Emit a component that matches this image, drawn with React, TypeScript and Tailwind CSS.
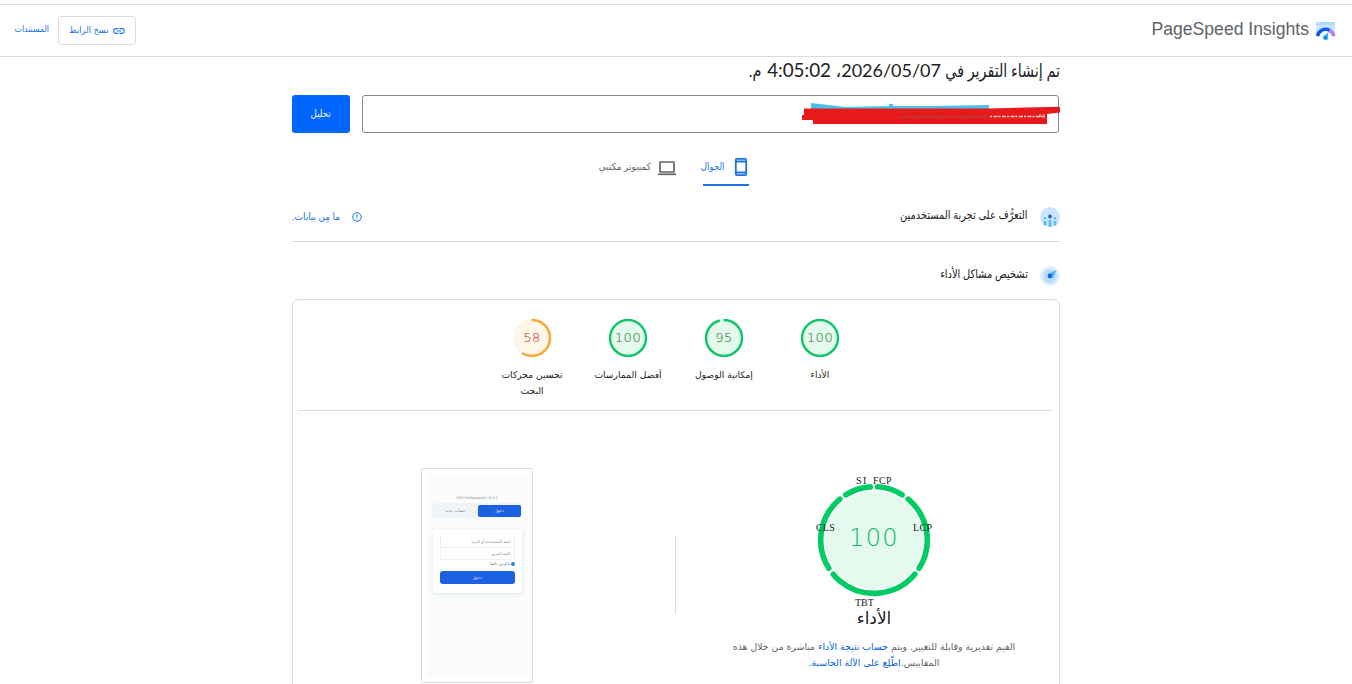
import type { ReactNode } from 'react';
import { clsx } from 'clsx';

interface ScoreProps {
  score: number;
  label: string;
  tone?: 'pass' | 'average';
}

function ScoreGauge({ score, label, tone = 'pass' }: ScoreProps) {
  const pass = tone === 'pass';
  return (
    <div className="flex w-24 flex-col items-center">
      <div className="relative size-10">
        <svg viewBox="0 0 40 40" className="size-10">
          <circle cx="20" cy="20" r="19" fill={pass ? '#e5faef' : '#fff6ea'} />
          <circle
            cx="20"
            cy="20"
            r="18"
            fill="none"
            stroke={pass ? '#18c46b' : '#f6a93b'}
            strokeWidth="2.5"
            strokeLinecap={score < 100 ? 'round' : 'butt'}
            pathLength={100}
            strokeDasharray={score < 100 ? `${score} 100` : undefined}
            strokeDashoffset={score < 100 ? -0.5 : undefined}
            transform="rotate(-90 20 20)"
          />
        </svg>
        <span
          dir="ltr"
          className={clsx(
            "absolute inset-0 flex items-center justify-center font-['DejaVu_Sans',sans-serif] text-[13px] font-extralight tracking-[0.6px]",
            pass ? 'text-[#0f6f0f]' : 'text-[#b42c0c]',
          )}
        >
          {score}
        </span>
      </div>
      <span className="mt-[9px] w-[76px] text-center font-['DejaVu_Sans',sans-serif] text-[9.2px] leading-4 text-[#212121]">
        {label}
      </span>
    </div>
  );
}

// Start and end angle of every metric arc, clockwise from the top.
const arcs = [
  [4, 32],
  [40, 122],
  [130, 230],
  [238, 320],
  [328, 356],
];

const metrics = [
  { name: 'SI', place: 'left-[44px] top-[1px] tracking-[1.4px]' },
  { name: 'FCP', place: 'left-[61px] top-[1px] tracking-[0.4px]' },
  { name: 'CLS', place: 'left-[4px] top-[48px] tracking-[0.2px]' },
  { name: 'LCP', place: 'left-[101px] top-[48px] tracking-[0.3px]' },
  { name: 'TBT', place: 'left-[43px] top-[123px]' },
];

function PerformanceGauge() {
  return (
    <div dir="ltr" className="relative h-[136px] w-[124px]">
      <svg viewBox="0 0 124 136" className="h-[136px] w-[124px]">
        <circle cx="62" cy="68" r="49" fill="#e5faef" />
        {arcs.map(([from, to]) => (
          <circle
            key={from}
            cx="62"
            cy="68"
            r="53.3"
            fill="none"
            stroke="#0c6"
            strokeWidth="5.6"
            strokeLinecap="round"
            pathLength={360}
            strokeDasharray={`${to - from} 360`}
            transform={`rotate(${from - 90} 62 68)`}
          />
        ))}
      </svg>
      <span className="absolute inset-x-0 top-[50px] text-center font-['DejaVu_Sans',sans-serif] text-[24px] leading-8 font-extralight tracking-[1.4px] text-[#08b95b]">
        100
      </span>
      {metrics.map(({ name, place }) => (
        <span
          key={name}
          className={clsx("absolute font-['Liberation_Serif',serif] text-[10px] leading-4 text-[#212121]", place)}
        >
          {name}
        </span>
      ))}
    </div>
  );
}

function PhonePreview() {
  return (
    <div className="h-[215px] w-28 rounded-xs border border-[#d8dbde] bg-white p-[5px]">
      <div className="flex h-full flex-col items-center bg-[#fafcfc] pt-[22px] font-['DejaVu_Sans',sans-serif]">
        <span dir="ltr" className="h-[5px] text-[3.5px] leading-[5px] text-[#8c9196]">SMT Professional v5.0.1</span>
        <div className="mt-[2px] flex h-[15px] w-[90px] items-center rounded-[3px] bg-[#f0f4f8] px-px">
          <div className="flex h-3 w-[43px] items-center justify-center rounded-[2px] bg-[#1b60e0] text-[4px] text-white">دخول</div>
          <div className="flex-1 text-center text-[4px] text-[#6d747c]">حساب جديد</div>
        </div>
        <div className="mt-[11px] h-[64px] w-[89px] rounded-[3px] bg-white px-[7px] pt-[7px] shadow-[0_1px_4px_#dde5e8]">
          <div className="flex h-3 items-center border border-t-0 border-[#edf0f2] px-[3px] text-[4px] text-[#858b90]">اسم المستخدم أو البريد</div>
          <div className="flex h-3 items-center border border-t-0 border-[#edf0f2] px-[3px] text-[4px] text-[#858b90]">كلمة المرور</div>
          <div className="flex h-[11px] items-center pb-1 text-[4px] text-[#50565c]">
            <i className="size-1 rounded-full bg-[#2484e0]" />
            تذكرني دائما
          </div>
          <div className="flex h-[13px] items-center justify-center rounded-[3px] bg-[#1b60e0] text-[4px] text-white">دخول</div>
        </div>
      </div>
    </div>
  );
}

function SectionTitle({ icon, children }: { icon: ReactNode; children: ReactNode }) {
  return (
    <div className="flex items-center gap-3">
      {icon}
      <h2 className="origin-right scale-x-[.82] pb-1 text-[12px] leading-5 whitespace-nowrap text-[#202124]">{children}</h2>
    </div>
  );
}

function UsersIcon() {
  return (
    <svg viewBox="0 0 20 20" className="size-5">
      <circle cx="10" cy="10" r="10" fill="#cce4fc" />
      <path d="M5 14v4.500M10 13v7M15 14v4.500" stroke="#53bdf3" strokeWidth="2.6" />
      <circle cx="5" cy="11.3" r="1.3" fill="#53bdf3" />
      <circle cx="15" cy="11.3" r="1.3" fill="#53bdf3" />
      <circle cx="10" cy="9.5" r="1.9" fill="#1769e0" />
    </svg>
  );
}

function DiagnoseIcon() {
  return (
    <svg viewBox="0 0 20 20" className="size-5">
      <circle cx="10" cy="10" r="10" fill="#e0effe" />
      <circle cx="10" cy="10" r="7" fill="#bcdcfd" />
      <path d="M8 8l8.500-4-4 8.500z" fill="#4bb8f5" />
      <circle cx="10" cy="10" r="2.4" fill="#1268ea" />
    </svg>
  );
}

function Logo() {
  return (
    <svg viewBox="0 0 20 20" className="mt-px size-5">
      <path d="M0 1h19v14H0z" fill="#cbe5fd" />
      <path d="M0 1h19v3H0z" fill="#afd8fb" />
      <path d="M1.500 2.500h4" stroke="#fff" strokeDasharray="1 1" />
      <path d="M3 17a6.500 6.500 0 0 1 13 0z" fill="#fff" />
      <path d="M1.600 15.200a8.200 8.200 0 0 1 12-6" fill="none" stroke="#0b57f0" strokeWidth="3.4" />
      <path d="M13.600 9.200a8.200 8.200 0 0 1 4.200 6" fill="none" stroke="#bd78f4" strokeWidth="3.4" />
      <path d="M8 15l4.500-4-.8 6z" fill="#35b5ef" />
      <circle cx="9.600" cy="16.600" r="2.700" fill="#35b5ef" />
      <circle cx="9.600" cy="16.600" r="1.100" fill="#1067df" />
    </svg>
  );
}

// Marker strokes that cover the address in the field.
function Redaction() {
  return (
    <svg viewBox="0 0 260 24" className="absolute -right-0.5 top-[6px] h-6 w-[260px]">
      <path d="M11 1q18 2 34 4l44-1V2h4v2h40l56-1v5H11z" fill="#49bfe9" />
      <path d="M4 6.500h184l72-1.800v5.800l-13 1.500v10H13v-4H2v-5h2z" fill="#e8191b" />
      <path d="M100 15h90" stroke="#87616c" strokeWidth="1" strokeDasharray="3 1 1 1" />
      <path d="M190 14.500h55" stroke="#f7dada" strokeWidth="1.300" strokeDasharray="2 1.500 4 1" />
      <path d="M240 12v3M244 12v4" stroke="#f7dada" />
    </svg>
  );
}

export default function App() {
  return (
    <div dir="rtl" className="h-[684px] overflow-hidden bg-white pt-1 font-['Liberation_Sans','DejaVu_Sans',sans-serif] text-[#202124]">
      <header className="flex h-[53px] items-center justify-between border-y border-[#dadce0] pl-3.5 pr-4">
        <div className="flex items-center gap-[7px]">
          <Logo />
          <span dir="ltr" className="pb-[3px] text-[17.6px] text-[#5f6368]">PageSpeed Insights</span>
        </div>
        <div className="flex items-center gap-[9px] text-[9px] text-[#1a73e8]">
          <button className="flex h-[29px] w-[78px] items-center gap-[3px] rounded-[3px] border border-[#dadce0] pr-[9px]">
            <svg viewBox="0 0 24 24" className="size-3.5 shrink-0" fill="currentColor">
              <path d="M3.900 12c0-1.710 1.390-3.100 3.100-3.100h4V7H7c-2.760 0-5 2.240-5 5s2.240 5 5 5h4v-1.900H7c-1.710 0-3.100-1.390-3.100-3.100zM8 13h8v-2H8v2zm9-6h-4v1.900h4c1.710 0 3.100 1.390 3.100 3.100s-1.390 3.100-3.100 3.100h-4V17h4c2.760 0 5-2.240 5-5s-2.240-5-5-5z" />
            </svg>
            <span className="origin-right scale-x-[.93] whitespace-nowrap">نسخ الرابط</span>
          </button>
          <a className="w-[35px] origin-right scale-x-[.87] pb-0.5 whitespace-nowrap">المستندات</a>
        </div>
      </header>

      <main className="mx-auto w-[768px]">
        <h1 className="flex h-[38px] font-['Lato','DejaVu_Sans',sans-serif] text-[18px] leading-[26px] whitespace-nowrap">
          <span className="w-[119px] origin-right scale-x-[.795]">تم إنشاء التقرير في</span>
          <span className="w-[110px]">2026/05/07،</span>
          <span className="w-[66px] text-[18.8px]">4:05:02</span>
          <span className="pr-[4px]"><span className="inline-block origin-right scale-x-[.8]">م.</span></span>
        </h1>
        <div className="flex gap-3">
          <div className="relative mr-px h-[38px] w-[697px] rounded-[3px] border border-[#80868b]">
            <Redaction />
          </div>
          <button className="h-[38px] w-[58px] rounded-[3px] bg-[#0066ff] pb-0.5 text-[10px] text-white">
            <span className="inline-block scale-x-[.86]">تحليل</span>
          </button>
        </div>

        <nav className="mt-4 flex justify-center gap-[26px] text-[10px]">
          <div className="mr-[4px] flex h-[37px] w-[46px] items-center gap-[9px] border-b-2 border-[#1a73e8] text-[#1a73e8]">
            <svg viewBox="0 0 16 20" className="h-5 w-4 shrink-0" fill="none" stroke="currentColor" strokeWidth="1.8">
              <rect x="2.800" y="1.900" width="10.400" height="16.200" rx="1" />
              <path d="M3 4.500h10M3 15.500h10" />
            </svg>
            <span className="origin-right scale-x-[.86] whitespace-nowrap">الجوال</span>
          </div>
          <div className="flex h-[37px] w-[78px] items-center gap-1.5 text-[#5f6368]">
            <svg viewBox="0 0 20 18" className="h-[18px] w-5 shrink-0" fill="none" stroke="currentColor" strokeWidth="1.700">
              <rect x="3" y="3" width="14" height="10" rx=".5" />
              <path d="M1 15.300h18" />
            </svg>
            <span className="origin-right scale-x-[.9] pb-0.5 whitespace-nowrap">كمبيوتر مكتبي</span>
          </div>
        </nav>

        <section className="mt-[7px] flex h-[49px] items-center justify-between border-b border-[#dadce0]">
          <SectionTitle icon={<UsersIcon />}>التعرُّف على تجربة المستخدمين</SectionTitle>
          <div className="flex items-center gap-[11px] text-[10px] text-[#1a73e8]">
            <svg viewBox="0 0 12 12" className="size-3" fill="none" stroke="currentColor">
              <circle cx="6" cy="6" r="4.300" />
              <path d="M6 3.300v3.200M6 7.700v1" />
            </svg>
            <span className="w-12 origin-right scale-x-[.89] pb-0.5 whitespace-nowrap">ما مِن بيانات.</span>
          </div>
        </section>

        <section className="pt-[22px]">
          <SectionTitle icon={<DiagnoseIcon />}>تشخيص مشاكل الأداء</SectionTitle>
          <div className="mt-[11px] h-[400px] rounded-t-md border border-[#dadce0] pt-[18px] pr-[7px] pl-[5px]">
            <div className="flex h-[93px] justify-center border-b border-[#dadce0] pl-0.5">
              <ScoreGauge score={100} label="الأداء" />
              <ScoreGauge score={95} label="إمكانية الوصول" />
              <ScoreGauge score={100} label="أفضل الممارسات" />
              <ScoreGauge score={58} label="تحسين محركات البحث" tone="average" />
            </div>
            <div className="flex pt-[57px]">
              <div className="flex w-[356px] flex-col items-center pt-1">
                <PerformanceGauge />
                <h3 className="-mt-0.5 font-['DejaVu_Sans',sans-serif] text-[17px] leading-6">الأداء</h3>
                <p className="mt-[9px] w-[294px] text-center font-['DejaVu_Sans',sans-serif] text-[9.33px] leading-4 text-[#616161]">
                  القيم تقديرية وقابلة للتغيير. ويتم <a className="text-[#0062e0]">حساب نتيجة الأداء</a> مباشرة من خلال هذه المقاييس.
                  <a className="text-[#0062e0]">اطّلِع على الآلة الحاسبة.</a>
                </p>
              </div>
              <div className="mt-[68px] mr-5 h-[78px] w-px bg-[#dadce0]" />
              <div className="mr-[142px]">
                <PhonePreview />
              </div>
            </div>
          </div>
        </section>
      </main>
    </div>
  );
}
